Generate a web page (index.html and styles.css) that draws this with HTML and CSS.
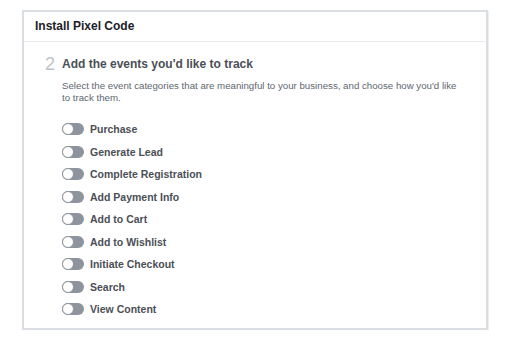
FILE: index.html
```html
<!DOCTYPE html>
<html lang="en">
<head>
    <meta charset="UTF-8">
    <meta name="viewport" content="width=device-width, initial-scale=1.0">
    <title>Install Pixel Code</title>
    <link rel="stylesheet" href="styles.css">
</head>
<body>
    <div class="card">
        <div class="card-header">Install Pixel Code</div>
        <div class="card-body">
            <div class="step">
                <div class="step-number">2</div>
                <div class="step-content">
                    <div class="step-title">Add the events you'd like to track</div>
                    <div class="step-desc">Select the event categories that are meaningful to your business, and choose how you'd like to track them.</div>

                    <ul class="event-list">
                        <li class="event"><span class="toggle"></span>Purchase</li>
                        <li class="event"><span class="toggle"></span>Generate Lead</li>
                        <li class="event"><span class="toggle"></span>Complete Registration</li>
                        <li class="event"><span class="toggle"></span>Add Payment Info</li>
                        <li class="event"><span class="toggle"></span>Add to Cart</li>
                        <li class="event"><span class="toggle"></span>Add to Wishlist</li>
                        <li class="event"><span class="toggle"></span>Initiate Checkout</li>
                        <li class="event"><span class="toggle"></span>Search</li>
                        <li class="event"><span class="toggle"></span>View Content</li>
                    </ul>
                </div>
            </div>
        </div>
    </div>
</body>
</html>
```

FILE: styles.css
```css
body {
    font-family: "Liberation Sans", Arial, sans-serif;
    margin: 0;
    padding: 10px 22px 0 22px;
    background-color: #fff;
}

.card {
    width: 462px;
    height: 316px;
    border: 2px solid #dadde1;
    box-shadow: 1px 1px 0 #eceef0;
    background-color: #fff;
}

.card-header {
    height: 25px;
    line-height: 25px;
    padding: 2px 0 2px 11px;
    font-size: 12px;
    font-weight: bold;
    color: #1d2129;
    border-bottom: 1px solid #e9ebee;
}

.card-body {
    padding: 12px 0 0 21px;
}

.step {
    display: flex;
    gap: 5px;
}

.step-number {
    font-size: 18px;
    color: #bec3c9;
    line-height: 20px;
    width: 12px;
}

.step-title {
    font-size: 12px;
    font-weight: bold;
    color: #4b4f56;
    line-height: 20px;
}

.step-desc {
    font-size: 9.7px;
    color: #606770;
    line-height: 12px;
    margin-top: 6px;
    width: 400px;
}

.event-list {
    list-style: none;
    margin: 14px 0 0 0;
    padding: 0;
}

.event {
    display: flex;
    align-items: center;
    gap: 6px;
    height: 22.5px;
    font-size: 10.5px;
    font-weight: bold;
    color: #4b4f56;
}

.toggle {
    position: relative;
    width: 22px;
    height: 12px;
    border-radius: 6px;
    background-color: #8d949e;
}

.toggle::before {
    content: "";
    position: absolute;
    left: 0;
    top: 0;
    width: 10px;
    height: 10px;
    border-radius: 50%;
    background-color: #fff;
    border: 1px solid #8d949e;
}
```
